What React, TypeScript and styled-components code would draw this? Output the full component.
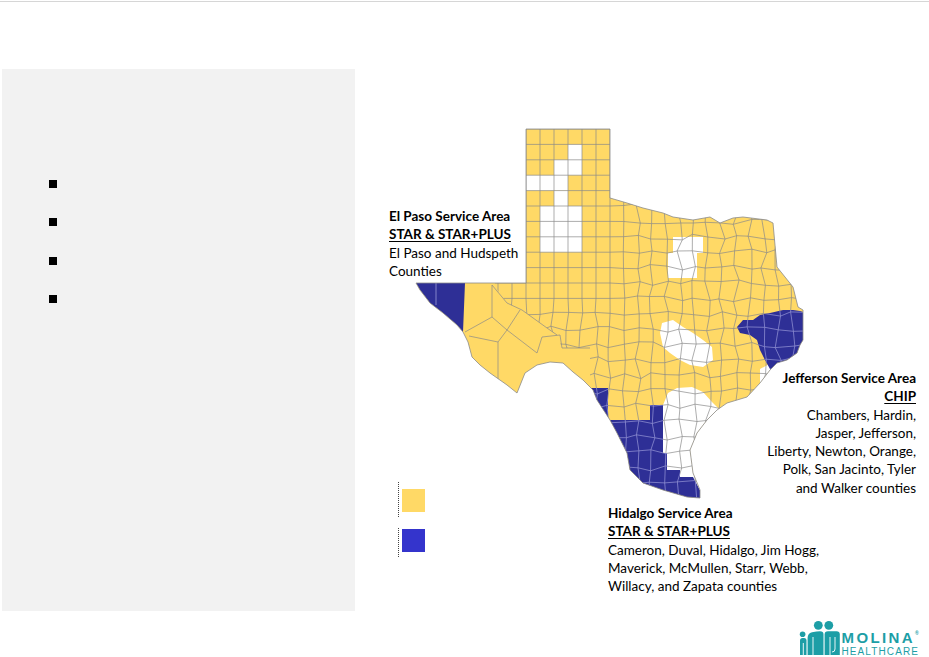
import React from "react";
import styled, { createGlobalStyle } from "styled-components";

const GlobalStyle = createGlobalStyle`
  html, body {
    margin: 0;
    padding: 0;
    background: #fff;
  }
  body {
    font-family: Lato, "Open Sans", sans-serif;
    color: #000;
  }
`;

const Page = styled.div`
  width: 929px;
  height: 657px;
  display: flex;
  flex-direction: column;
  overflow: hidden;
`;

const TopRule = styled.div`
  margin-top: 1px;
  height: 1px;
  background: #d6d6d6;
`;

const Main = styled.div`
  display: flex;
  margin-top: 67px;
  height: 542px;
`;

const Panel = styled.section`
  width: 353px;
  margin-left: 2px;
  box-sizing: border-box;
  padding: 111px 0 0 47px;
  background: #f2f2f2;
`;

const BulletList = styled.ul`
  list-style: none;
  margin: 0;
  padding: 0;
  display: flex;
  flex-direction: column;
  gap: 30.3px;
`;

const Bullet = styled.li`
  width: 8px;
  height: 8px;
  background: #000;
`;

const MapFigure = styled.figure`
  position: relative;
  flex: 1;
  margin: 0;
`;

const MapSvg = styled.svg`
  display: block;
  width: 574px;
  height: 542px;
`;

const Callout = styled.div<{ $left?: number; $right?: number; $top: number }>`
  position: absolute;
  top: ${(p) => p.$top}px;
  ${(p) => (p.$left !== undefined ? `left: ${p.$left}px;` : "")}
  ${(p) => (p.$right !== undefined ? `right: ${p.$right}px; text-align: right;` : "")}
  font-size: 13.5px;
  line-height: 18.3px;
  white-space: nowrap;
`;

const Title = styled.div`
  font-weight: 700;
`;

const Program = styled.div`
  font-weight: 700;
  text-decoration: underline;
  text-underline-offset: 1.5px;
`;

const Line = styled.div``;

const Legend = styled.div`
  position: absolute;
  left: 43px;
  top: 413px;
  display: flex;
  flex-direction: column;
  gap: 11px;
`;

const LegendItem = styled.div<{ $padTop: number }>`
  border-left: 1px dotted #444;
  padding: ${(p) => p.$padTop}px 0 5px 3px;
`;

const Swatch = styled.div<{ $color: string }>`
  width: 23px;
  height: 23px;
  background: ${(p) => p.$color};
`;

const Footer = styled.footer`
  flex: 1;
  display: flex;
  justify-content: flex-end;
  align-items: flex-end;
  padding-right: 10px;
`;

const Logo = styled.div`
  display: flex;
  align-items: flex-end;
  color: #1d9ea6;
  svg {
    margin-bottom: 1.5px;
    margin-right: 1px;
  }
`;

const LogoText = styled.div`
  display: flex;
  flex-direction: column;
  font-family: "Liberation Sans", Arial, sans-serif;
`;

const Brand = styled.div`
  font-size: 15px;
  line-height: 13px;
  font-weight: 700;
  letter-spacing: 2.4px;
  sup {
    font-size: 5px;
    line-height: 0;
    vertical-align: 8px;
    letter-spacing: 0;
  }
`;

const Tagline = styled.div`
  font-size: 10px;
  line-height: 10px;
  letter-spacing: 1.1px;
  margin-top: 2.6px;
`;

const YELLOW = "#ffd966";
const NAVY = "#2e2f96";

const TEXAS =
  "526,129 610,129 610,198 627,203 643,208 663,213 673,217 693,220 710,217 720,223 733,218 743,217 767,220 773,223 777,267 793,287 798,307 803,310 803,340 800,345 797,353 787,360 777,363 770,370 760,383 747,397 727,403 717,410 707,420 697,433 690,450 693,473 700,490 700,498 687,497 663,490 643,483 630,470 627,453 617,433 610,420 597,400 593,390 583,380 573,372 563,363 550,362 537,365 525,373 517,393 507,385 490,373 480,365 472,357 468,342 463,332 457,325 443,313 430,303 420,290 416,283 526,283";

const GRID_AREA =
  "495,100 840,100 840,520 590,520 590,348 562,348 557,335 522,310 507,303 495,287";

const EL_PASO = "416,283 465,283 463,332 457,325 443,313 430,303 420,290";
const HIDALGO =
  "589,388 608,388 608,420 650,420 650,405 663,405 663,453 667,453 667,470 680,470 680,477 693,477 705,500 687,502 663,494 640,486 626,470 622,453 612,433 605,420 592,400";
const JEFFERSON =
  "737,327 743,320 753,320 760,315 770,313 783,310 793,310 800,311 806,313 806,337 804,350 797,354 783,363 777,367 770,369 765,360 760,350 757,340 750,335 740,333";

const WHITE_CELLS = [
  [568, 144.4, 14, 30.8],
  [554, 159.8, 14, 30.8],
  [526, 175.2, 28, 15.4],
  [554, 190.6, 14, 15.4],
  [540, 206, 42, 46.2],
];

const WHITE_AREAS = [
  "673,237 703,237 703,253 697,253 697,278 668,278 668,253 673,253",
  "662,323 673,320 683,327 693,333 703,340 712,347 713,360 703,367 690,365 680,360 670,353 663,347 660,333",
  "663,405 668,393 677,388 692,387 703,392 712,402 720,410 780,410 780,520 693,520 693,477 680,477 680,470 667,470 667,453 663,453",
  "760,369 775,361 792,360 792,382 760,386",
];

const TRANS_PECOS =
  "M492,285 L492,317 M465,332 L492,317 L507,330 M492,285 L507,303 L522,310 L547,328 L557,335 M507,330 L520,310 M469,336 L498,342 L507,330 M498,342 L498,383 M507,330 L537,353 M537,353 L542,337 L560,335 L562,348 L590,348";

const rnd = (a: number, b: number) => {
  const s = Math.sin(a * 127.1 + b * 311.7) * 43758.5453;
  return (s - Math.floor(s)) * 2 - 1;
};

const clamp01 = (v: number) => Math.min(Math.max(v, 0), 1);

const SX = 14;
const SY = 15.4;
const X0 = 400;
const Y0 = 129;

// county grid: square in the west, slightly irregular toward the east and south
const gridPoint = (i: number, j: number) => {
  const x = X0 + i * SX;
  const y = Y0 + j * SY;
  const amp = Math.max(clamp01((x - 615) / 30), clamp01((y - 300) / 30)) * 3.2;
  return `${(x + rnd(i, j) * amp).toFixed(1)},${(y + rnd(j + 17, i + 5) * amp).toFixed(1)}`;
};

const buildGrid = () => {
  const cols = 31;
  const rows = 25;
  let d = "";
  for (let j = 0; j <= rows; j++) {
    d += `M${gridPoint(0, j)}`;
    for (let i = 1; i <= cols; i++) d += ` L${gridPoint(i, j)}`;
  }
  for (let i = 0; i <= cols; i++) {
    d += `M${gridPoint(i, 0)}`;
    for (let j = 1; j <= rows; j++) d += ` L${gridPoint(i, j)}`;
  }
  return d;
};

const GRID = buildGrid();

function TexasMap() {
  return (
    <MapSvg viewBox="355 69 574 542" xmlns="http://www.w3.org/2000/svg">
      <defs>
        <clipPath id="tx">
          <polygon points={TEXAS} />
        </clipPath>
        <clipPath id="grid-area">
          <polygon points={GRID_AREA} />
        </clipPath>
        <clipPath id="blue">
          <polygon points={EL_PASO} />
          <polygon points={HIDALGO} />
          <polygon points={JEFFERSON} />
        </clipPath>
      </defs>
      <polygon points={TEXAS} fill={YELLOW} />
      <g clipPath="url(#tx)">
        {WHITE_CELLS.map(([x, y, w, h]) => (
          <rect key={`${x}-${y}`} x={x} y={y} width={w} height={h} fill="#fff" />
        ))}
        {WHITE_AREAS.map((pts) => (
          <polygon key={pts} points={pts} fill="#fff" />
        ))}
        <g clipPath="url(#grid-area)">
          <path d={GRID} fill="none" stroke="#8a8a8a" strokeWidth={0.7} />
        </g>
        <path d={TRANS_PECOS} fill="none" stroke="#8a8a8a" strokeWidth={0.7} />
        <polygon points={EL_PASO} fill={NAVY} />
        <polygon points={HIDALGO} fill={NAVY} />
        <polygon points={JEFFERSON} fill={NAVY} />
        <g clipPath="url(#blue)">
          <g clipPath="url(#grid-area)">
            <path d={GRID} fill="none" stroke="#9a9ad8" strokeWidth={0.7} />
          </g>
        </g>
        <path d="M436,283 L436,305" stroke="#9a9ad8" strokeWidth={0.8} />
      </g>
      <polygon points={TEXAS} fill="none" stroke="#8a8a8a" strokeWidth={0.8} />
    </MapSvg>
  );
}

function MolinaMark() {
  return (
    <svg width="42" height="36" viewBox="0 0 42 36" xmlns="http://www.w3.org/2000/svg">
      <g fill="currentColor">
        <circle cx="3.6" cy="14.2" r="2.8" />
        <circle cx="19.3" cy="5.3" r="4.4" />
        <circle cx="29.8" cy="5.3" r="4.4" />
        <path d="M1 35 V20.5 Q1 18 3.5 18 H5 Q7.5 18 7.5 20.5 V35 Z" />
        <path d="M8.6 35 V18 Q8.6 13.5 13 12.2 Q18 11.3 21 11.3 Q24.5 11.3 24.5 14.5 V35 Z" />
        <path d="M25.6 35 V14.5 Q25.6 11.3 29 11.3 H37.5 Q40.8 11.3 40.8 14.5 V35 Z" />
      </g>
      <g stroke="#fff" strokeWidth="0.9" fill="none">
        <path d="M4.3 23 V35" />
        <path d="M14 17 V35" />
        <path d="M31 17 V35" />
        <path d="M36 17 V29 Q36 32 33 32" />
      </g>
    </svg>
  );
}

export default function App() {
  return (
    <>
      <GlobalStyle />
      <Page>
        <TopRule />
        <Main>
          <Panel>
            <BulletList>
              <Bullet />
              <Bullet />
              <Bullet />
              <Bullet />
            </BulletList>
          </Panel>
          <MapFigure>
            <TexasMap />
            <Callout $left={34} $top={138}>
              <Title>El Paso Service Area</Title>
              <Program>STAR &amp; STAR+PLUS</Program>
              <Line>El Paso and Hudspeth</Line>
              <Line>Counties</Line>
            </Callout>
            <Callout $right={13} $top={300}>
              <Title>Jefferson Service Area</Title>
              <Program>CHIP</Program>
              <Line>Chambers, Hardin,</Line>
              <Line>Jasper, Jefferson,</Line>
              <Line>Liberty, Newton, Orange,</Line>
              <Line>Polk, San Jacinto, Tyler</Line>
              <Line>and Walker counties</Line>
            </Callout>
            <Callout $left={253} $top={435}>
              <Title>Hidalgo Service Area</Title>
              <Program>STAR &amp; STAR+PLUS</Program>
              <Line>Cameron, Duval, Hidalgo, Jim Hogg,</Line>
              <Line>Maverick, McMullen, Starr, Webb,</Line>
              <Line>Willacy, and Zapata counties</Line>
            </Callout>
            <Legend>
              <LegendItem $padTop={7}>
                <Swatch $color={YELLOW} />
              </LegendItem>
              <LegendItem $padTop={1}>
                <Swatch $color="#3434cc" />
              </LegendItem>
            </Legend>
          </MapFigure>
        </Main>
        <Footer>
          <Logo>
            <MolinaMark />
            <LogoText>
              <Brand>
                MOLINA<sup>®</sup>
              </Brand>
              <Tagline>HEALTHCARE</Tagline>
            </LogoText>
          </Logo>
        </Footer>
      </Page>
    </>
  );
}
